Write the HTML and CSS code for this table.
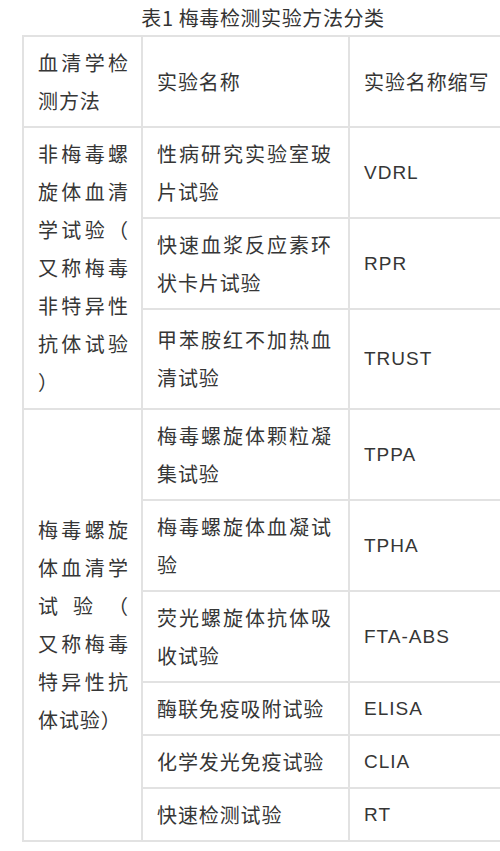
FILE: index.html
```html
<!DOCTYPE html>
<html lang="zh-CN">
<head>
<meta charset="utf-8">
<title>表1 梅毒检测实验方法分类</title>
<link rel="stylesheet" href="styles.css">
</head>
<body>
<div class="page">
  <div class="wrap">
    <div class="caption">表1 梅毒检测实验方法分类</div>
    <table class="tbl">
      <colgroup>
        <col class="c1"><col class="c2"><col class="c3">
      </colgroup>
      <tr class="r2">
        <td class="m"><span class="ln j">血清学检</span><span class="ln">测方法</span></td>
        <td class="n">实验名称</td>
        <td class="a">实验名称缩写</td>
      </tr>
      <tr class="r2">
        <td class="m" rowspan="3"><span class="ln j">非梅毒螺</span><span class="ln j">旋体血清</span><span class="ln j">学试验（</span><span class="ln j">又称梅毒</span><span class="ln j">非特异性</span><span class="ln j">抗体试验</span><span class="ln">）</span></td>
        <td class="n"><span class="ln j">性病研究实验室玻</span><span class="ln">片试验</span></td>
        <td class="a lat">VDRL</td>
      </tr>
      <tr class="r2">
        <td class="n"><span class="ln j">快速血浆反应素环</span><span class="ln">状卡片试验</span></td>
        <td class="a lat">RPR</td>
      </tr>
      <tr class="r3">
        <td class="n"><span class="ln j">甲苯胺红不加热血</span><span class="ln">清试验</span></td>
        <td class="a lat">TRUST</td>
      </tr>
      <tr class="r2">
        <td class="m" rowspan="6"><span class="ln j">梅毒螺旋</span><span class="ln j">体血清学</span><span class="ln j">试验（</span><span class="ln j">又称梅毒</span><span class="ln j">特异性抗</span><span class="ln">体试验）</span></td>
        <td class="n"><span class="ln j">梅毒螺旋体颗粒凝</span><span class="ln">集试验</span></td>
        <td class="a lat">TPPA</td>
      </tr>
      <tr class="r2">
        <td class="n"><span class="ln j">梅毒螺旋体血凝试</span><span class="ln">验</span></td>
        <td class="a lat">TPHA</td>
      </tr>
      <tr class="r2">
        <td class="n"><span class="ln j">荧光螺旋体抗体吸</span><span class="ln">收试验</span></td>
        <td class="a lat">FTA-ABS</td>
      </tr>
      <tr class="r1">
        <td class="n">酶联免疫吸附试验</td>
        <td class="a lat">ELISA</td>
      </tr>
      <tr class="r1">
        <td class="n">化学发光免疫试验</td>
        <td class="a lat">CLIA</td>
      </tr>
      <tr class="r1">
        <td class="n">快速检测试验</td>
        <td class="a lat">RT</td>
      </tr>
    </table>
  </div>
</div>
</body>
</html>
```
FILE: styles.css
```css
html, body {
  margin: 0;
  padding: 0;
  background: #ffffff;
  overflow: hidden;
}
body {
  font-family: "Noto Sans CJK SC", "Noto Sans", sans-serif;
  color: #363636;
}
.page {
  width: 500px;
  height: 851px;
  overflow: hidden;
}
.wrap {
  width: 482px;
  margin-left: 22px;
}
.caption {
  height: 35px;
  line-height: 35px;
  font-size: 20px;
  letter-spacing: 0.6px;
  text-align: center;
  color: #333333;
}
.tbl {
  border-collapse: collapse;
  table-layout: fixed;
  width: 490px;
  font-size: 20px;
  letter-spacing: 0.9px;
  line-height: 38px;
}
.c1 { width: 119px; }
.c2 { width: 207px; }
.c3 { width: 164px; }
.tbl td {
  border: 2px solid #e2e2e2;
  padding: 6px 14px 6px 14px;
  vertical-align: middle;
  text-align: left;
}
.tbl td.n {
  padding-right: 16px;
}
.tbl td.m {
  padding-right: 12px;
}
.r1 { height: 53px; }
.r2 { height: 91px; }
.r3 { height: 100px; }
.ln {
  display: block;
}
.ln.j {
  text-align: justify;
  text-align-last: justify;
}
.lat {
  font-family: "Liberation Sans", "Noto Sans CJK SC", sans-serif;
  font-size: 19px;
  letter-spacing: 1px;
}
.tbl td.a:not(.lat) {
  white-space: nowrap;
}
```
